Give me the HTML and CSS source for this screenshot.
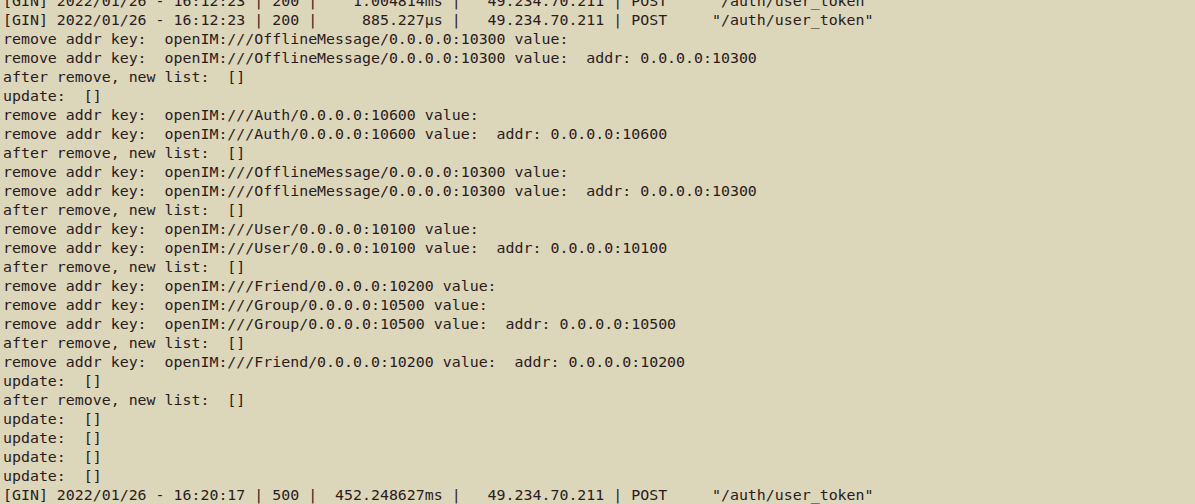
FILE: index.html
```html
<!DOCTYPE html>
<html lang="en">
<head>
<meta charset="utf-8">
<title>Terminal log</title>
<link rel="stylesheet" href="styles.css">
</head>
<body>
<main class="terminal">
<pre class="log">[GIN] 2022/01/26 - 16:12:23 | 200 |    1.004814ms |   49.234.70.211 | POST     "/auth/user_token"
[GIN] 2022/01/26 - 16:12:23 | 200 |     885.227µs |   49.234.70.211 | POST     "/auth/user_token"
remove addr key:  openIM:///OfflineMessage/0.0.0.0:10300 value:
remove addr key:  openIM:///OfflineMessage/0.0.0.0:10300 value:  addr: 0.0.0.0:10300
after remove, new list:  []
update:  []
remove addr key:  openIM:///Auth/0.0.0.0:10600 value:
remove addr key:  openIM:///Auth/0.0.0.0:10600 value:  addr: 0.0.0.0:10600
after remove, new list:  []
remove addr key:  openIM:///OfflineMessage/0.0.0.0:10300 value:
remove addr key:  openIM:///OfflineMessage/0.0.0.0:10300 value:  addr: 0.0.0.0:10300
after remove, new list:  []
remove addr key:  openIM:///User/0.0.0.0:10100 value:
remove addr key:  openIM:///User/0.0.0.0:10100 value:  addr: 0.0.0.0:10100
after remove, new list:  []
remove addr key:  openIM:///Friend/0.0.0.0:10200 value:
remove addr key:  openIM:///Group/0.0.0.0:10500 value:
remove addr key:  openIM:///Group/0.0.0.0:10500 value:  addr: 0.0.0.0:10500
after remove, new list:  []
remove addr key:  openIM:///Friend/0.0.0.0:10200 value:  addr: 0.0.0.0:10200
update:  []
after remove, new list:  []
update:  []
update:  []
update:  []
update:  []
[GIN] 2022/01/26 - 16:20:17 | 500 |  452.248627ms |   49.234.70.211 | POST     "/auth/user_token"</pre>
</main>
</body>
</html>
```

FILE: styles.css
```css
html, body {
  margin: 0;
  padding: 0;
  background: #dcd6bb;
  height: 100%;
  overflow: hidden;
}

.terminal {
  background: #dcd6bb;
  height: 100%;
  padding-left: 3px;
  box-sizing: border-box;
}

.log {
  margin: -8px 0 0 0;
  font-family: "DejaVu Sans Mono", monospace;
  font-size: 14.92px;
  line-height: 19px;
  color: #2b1b1b;
  white-space: pre;
}
```
